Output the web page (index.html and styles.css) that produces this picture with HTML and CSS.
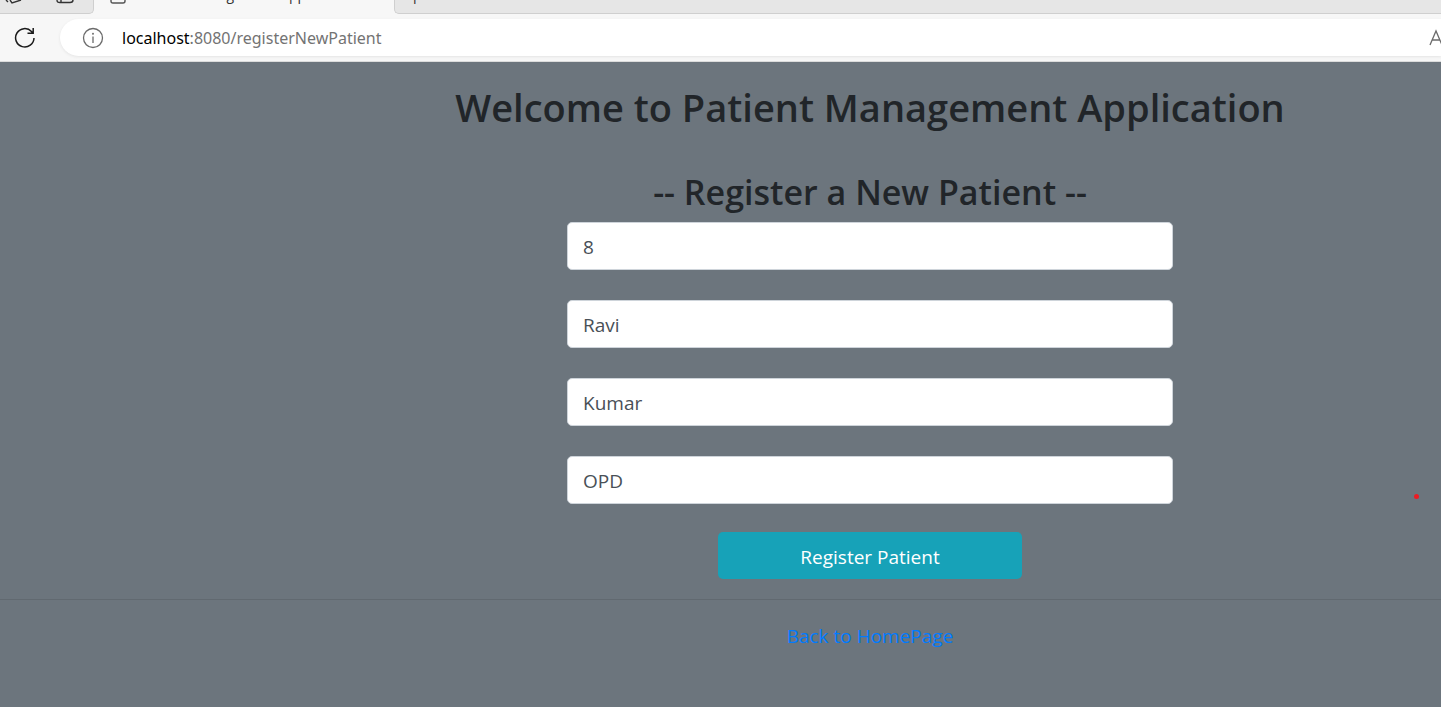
FILE: index.html
```html
<!DOCTYPE html>
<html lang="en">
<head>
<meta charset="utf-8">
<title>Patient Management Application</title>
<link rel="stylesheet" href="styles.css">
</head>
<body>
<header class="browser">
  <div class="tabs">
    <div class="tab tools">
      <svg width="93" height="13" viewBox="0 0 93 13" fill="none" stroke="#333" stroke-width="1.4"><path d="M6 0L8 2M10 0L12 3L21 0"/><path d="M57 0C57 2 58 2.500 60 2.500H70C72 2.500 73 2 73 0M61 0V2"/></svg>
    </div>
    <div class="tab active">
      <svg class="doc" width="16" height="14" viewBox="0 0 16 14" fill="none" stroke="#555" stroke-width="1.4"><path d="M1 0V1Q1 3 3 3H13Q15 3 15 1V0"/></svg>
      <span class="title">Patient Management Application</span>
    </div>
    <div class="tab rest"><span class="title">p</span></div>
  </div>
  <div class="toolbar">
    <button class="reload" type="button" aria-label="Refresh">
      <svg width="22" height="22" viewBox="0 0 22 22" fill="none" stroke="#1b1b1b" stroke-width="1.5"><path d="M20 11A9.200 9.200 0 1 1 17.500 4.500L19 6.200M19.200 1V6.200H13.500"/></svg>
    </button>
    <div class="address">
      <svg width="22" height="22" viewBox="0 0 22 22" fill="none" stroke="#6b6b6b" stroke-width="1.300"><circle cx="11" cy="11" r="9.500"/><path d="M11 9.500V16"/><circle cx="11" cy="6.700" r=".4"/></svg>
      <span class="url"><b>localhost</b>:8080/registerNewPatient</span>
      <svg class="read" width="12" height="18" viewBox="0 0 12 18" fill="none" stroke="#6b6b6b" stroke-width="1.300"><path d="M1 16L7 2L13 16M3 11H11"/></svg>
    </div>
  </div>
</header>
<main class="page">
  <div class="content">
    <h1>Welcome to Patient Management Application</h1>
    <h2>-- Register a New Patient --</h2>
    <form class="form">
      <input class="field" type="text" aria-label="Patient id" value="8">
      <input class="field" type="text" aria-label="First name" value="Ravi">
      <input class="field" type="text" aria-label="Last name" value="Kumar">
      <input class="field" type="text" aria-label="Department" value="OPD">
      <button class="submit" type="button">Register Patient</button>
    </form>
  </div>
  <hr class="rule">
  <div class="content"><a class="back" href="#">Back to HomePage</a></div>
  <span class="dot"></span>
</main>
</body>
</html>
```
FILE: styles.css
```css
* { box-sizing: border-box; }
body {
  margin: 0;
  min-height: 100vh;
  display: flex;
  flex-direction: column;
  background: #6c757d;
  color: #212529;
  font-family: "Segoe UI", "Open Sans", "Noto Sans", sans-serif;
  font-size: 19px;
  overflow-x: hidden;
}
.browser { background: #f7f7f7; border-bottom: 1px solid #dcdcdc; }
.tabs { display: flex; height: 14px; overflow: hidden; }
.tab { display: flex; align-items: flex-end; }
.tab svg { display: block; }
.tools { width: 94px; background: #e6e6e6; border: 1px solid #cfcfcf; border-width: 0 1px 1px 0; border-radius: 0 0 5px 0; }
.active { width: 300px; padding: 0 16px; gap: 14px; }
.rest { flex: 1; padding: 0 18px; background: #e6e6e6; border: 1px solid #cfcfcf; border-width: 0 0 1px 1px; border-radius: 0 0 0 5px; }
.title { padding-bottom: 11px; font-size: 14px; line-height: 16px; color: #333; white-space: nowrap; }
.rest .title { padding-bottom: 10px; }
.toolbar { display: flex; align-items: center; height: 47px; padding-left: 14px; gap: 24px; }
.reload { display: flex; padding: 0; border: 0; background: none; }
.address {
  flex: 1;
  display: flex;
  align-items: center;
  gap: 18px;
  height: 37px;
  padding-left: 22px;
  background: #fff;
  border-radius: 19px 0 0 19px;
  box-shadow: 0 1px 3px #e4e4e4;
}
.url { font-family: "Segoe UI", "Noto Sans", sans-serif; font-size: 16px; color: #737373; }
.url b { font-weight: 400; color: #000; }
.read { margin-left: auto; }
.page { position: relative; flex: 1; padding-top: 21px; }
.content { display: flex; flex-direction: column; align-items: center; margin-left: 299px; }
h1, h2 { margin: 0; font-weight: 600; white-space: nowrap; }
h1 { font-size: 38px; line-height: 48px; }
h2 { font-size: 34px; line-height: 44px; margin: 39px 0 8px; }
.form { display: flex; flex-direction: column; gap: 30px; width: 606px; }
.field {
  height: 48px;
  padding: 1px 15px 0;
  border: 1px solid #ced4da;
  border-radius: 5px;
  background: #fff;
  color: #495057;
  font: inherit;
}
.submit {
  align-self: center;
  width: 304px;
  height: 47px;
  margin-top: -2px;
  padding: 2px 0 0;
  border: 0;
  border-radius: 5px;
  background: #17a2b8;
  color: #fff;
  font: inherit;
}
.rule { margin: 20px 0; border: 0; border-top: 1px solid #616970; }
.back { line-height: 32px; color: #007bff; text-decoration: none; }
.dot { position: absolute; right: 22px; top: 432px; width: 5px; height: 5px; border-radius: 50%; background: #ed1c24; }
```
